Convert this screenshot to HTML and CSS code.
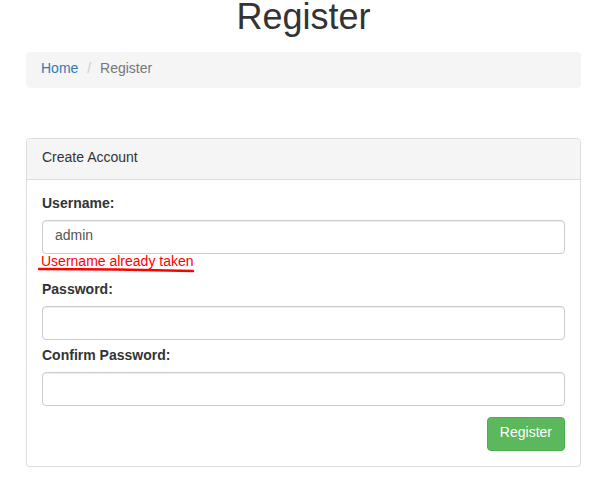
FILE: index.html
```html
<!DOCTYPE html>
<html>
<head>
<meta charset="utf-8">
<title>Register</title>
<link rel="stylesheet" href="styles.css">
</head>
<body>
<div class="container">
  <h1 class="title">Register</h1>
  <ol class="breadcrumb">
    <li><a href="#">Home</a></li>
    <li class="active">Register</li>
  </ol>
  <div class="panel">
    <div class="panel-heading">Create Account</div>
    <div class="panel-body">
      <form>
        <div class="form-group">
          <label class="label" for="username">Username:</label>
          <input class="form-control" id="username" type="text" value="admin">
          <div class="error">Username already taken<svg class="underline" width="160" height="6" viewBox="0 0 160 6"><path d="M1 2 Q 80 2.2 155 4" fill="none" stroke="#ff0000" stroke-width="2.4" stroke-linecap="round"/></svg></div>
        </div>
        <div class="form-group">
          <label class="label" for="password">Password:</label>
          <input class="form-control" id="password" type="password">
        </div>
        <div class="form-group form-group-last">
          <label class="label" for="confirm">Confirm Password:</label>
          <input class="form-control" id="confirm" type="password">
        </div>
        <div class="actions">
          <button class="btn-success" type="submit">Register</button>
        </div>
      </form>
    </div>
  </div>
</div>
</body>
</html>
```
FILE: styles.css
```css
* { box-sizing: border-box; }
html, body {
  margin: 0;
  padding: 0;
  background: #fff;
}
body {
  font-family: "Liberation Sans", Arial, Helvetica, sans-serif;
  font-size: 14px;
  line-height: 20px;
  color: #333;
}
.container {
  padding: 0 28px 0 26px;
}
.title {
  margin: 0;
  font-size: 36px;
  font-weight: normal;
  line-height: 34px;
  text-align: center;
  color: #333;
}
.breadcrumb {
  list-style: none;
  margin: 18px 0 0;
  padding: 6px 15px 10px;
  background: #f5f5f5;
  border-radius: 4px;
}
.breadcrumb li {
  display: inline-block;
}
.breadcrumb li + li::before {
  content: "/\00a0";
  padding: 0 5px;
  color: #ccc;
}
.breadcrumb a {
  color: #337ab7;
  text-decoration: none;
}
.breadcrumb .active {
  color: #777;
}
.panel {
  margin-top: 50px;
  border: 1px solid #ddd;
  border-radius: 4px;
  box-shadow: 0 1px 1px rgba(0,0,0,.05);
}
.panel-heading {
  padding: 8px 15px 12px;
  background: #f5f5f5;
  border-bottom: 1px solid #ddd;
  border-radius: 3px 3px 0 0;
  color: #333;
}
.panel-body {
  padding: 15px;
}
.form-group {
  margin-bottom: 7px;
}
.form-group-last {
  margin-bottom: 11px;
}
.label {
  display: block;
  font-weight: bold;
  line-height: 16px;
  padding-bottom: 4px;
  margin-bottom: 5px;
}
.form-control {
  display: block;
  width: 100%;
  height: 34px;
  padding: 4px 12px 8px;
  font-family: inherit;
  font-size: 14px;
  line-height: 20px;
  color: #555;
  background: #fff;
  border: 1px solid #ccc;
  border-radius: 4px;
  box-shadow: inset 0 1px 1px rgba(0,0,0,.075);
  outline: none;
}
.error {
  position: relative;
  margin-left: -1px;
  margin-bottom: 13px;
  line-height: 14px;
  color: #ff0000;
}
.underline {
  position: absolute;
  left: -3px;
  top: 13px;
}
.actions {
  display: flex;
  justify-content: flex-end;
}
.btn-success {
  padding: 4px 12px 8px;
  font-family: inherit;
  font-size: 14px;
  line-height: 20px;
  color: #fff;
  background: #5cb85c;
  border: 1px solid #4cae4c;
  border-radius: 4px;
  cursor: pointer;
}
```
